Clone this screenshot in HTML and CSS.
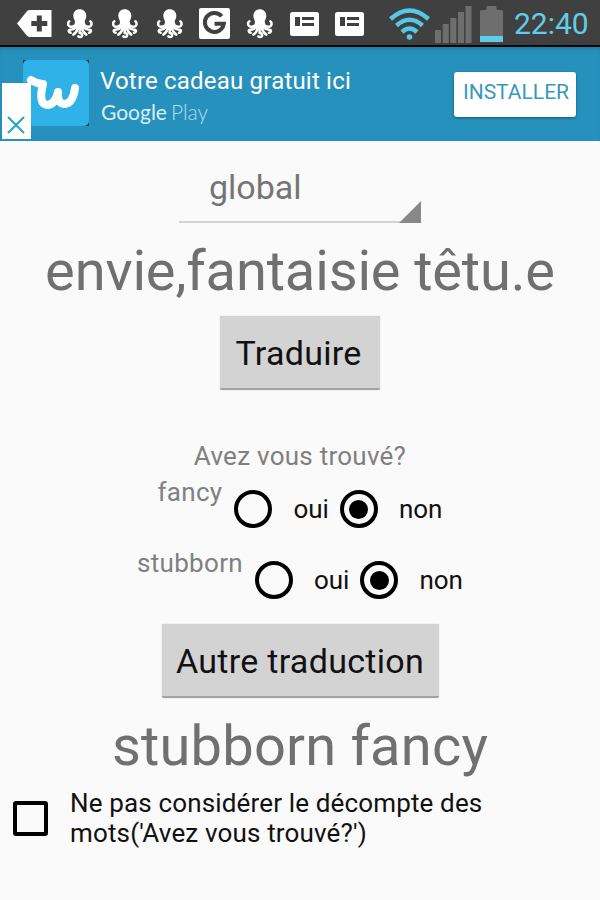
FILE: index.html
```html
<!DOCTYPE html>
<html lang="fr">
<head>
    <meta charset="UTF-8">
    <meta name="viewport" content="width=device-width, initial-scale=1.0">
    <title>Traduire</title>
    <link rel="stylesheet" href="styles.css">
</head>
<body>
    <svg width="0" height="0" class="symbols">
        <symbol id="octopus" viewBox="0 0 84 90">
            <path d="M41 1C30 1 22 9 22 20c0 8 4 12 5 18l-2 12 8 10h18l8-10-3-13c2-6 5-9 5-17C61 9 52 1 41 1z" fill="#fff"/>
            <g fill="none" stroke="#fff" stroke-width="7.5" stroke-linecap="round" stroke-linejoin="round">
                <path d="M10 37c-6 4-5 15 4 16 7 1 10-2 16-5"/>
                <path d="M73 37c6 4 5 15-4 16-7 1-10-2-16-5"/>
                <path d="M31 54c-5 5-9 9-19 8-6 0-5 9 2 9"/>
                <path d="M52 54c5 5 9 9 19 8 6 0 5 9-2 9"/>
                <path d="M36 57c-3 9-6 15-14 20"/>
                <path d="M47 57c3 9 6 15 14 20"/>
                <path d="M41 58v14c5 0 9 3 7 9-2 4-8 4-11 1"/>
            </g>
        </symbol>
        <symbol id="card" viewBox="0 0 29 24">
            <rect width="29" height="24" rx="2.5" fill="#fff"/>
            <path d="M5 5h5v9H5zM12 5h12v3H12zM12 11h12v3H12z" fill="#404040"/>
        </symbol>
    </svg>

    <div class="status-bar">
        <div class="notifications">
            <div class="notif"><svg width="35" height="27" viewBox="0 0 35 27"><path d="M0 13.5 10 1.2Q11 0 13 0h21.500v27H13q-2 0-3-1.200z" fill="#fff"/><path d="M22.300 5.500v16M14.300 13.500h16" stroke="#404040" stroke-width="5"/></svg></div>
            <div class="notif"><svg width="28" height="30"><use href="#octopus"/></svg></div>
            <div class="notif"><svg width="28" height="30"><use href="#octopus"/></svg></div>
            <div class="notif"><svg width="28" height="30"><use href="#octopus"/></svg></div>
            <div class="notif"><svg width="31" height="31" viewBox="0 0 31 31"><rect width="31" height="31" rx="2" fill="#fff"/><path d="M22.700 8.300A9.500 9.500 0 1 0 24.800 15.800H15.500" fill="none" stroke="#404040" stroke-width="4"/></svg></div>
            <div class="notif"><svg width="28" height="30"><use href="#octopus"/></svg></div>
            <div class="notif"><svg width="29" height="24"><use href="#card"/></svg></div>
            <div class="notif"><svg width="29" height="24"><use href="#card"/></svg></div>
        </div>
        <svg class="wifi" width="41" height="33" viewBox="0 0 41 33">
            <g fill="none" stroke="#55c8e6" stroke-width="4.500">
                <path d="M1.500 11Q20.500-6 39.500 11"/>
                <path d="M7.500 17.500Q20.500 6 33.500 17.500"/>
                <path d="M13 24Q20.500 17 28 24"/>
            </g>
            <circle cx="20.500" cy="29" r="2.800" fill="#55c8e6"/>
        </svg>
        <svg class="signal" width="37" height="37" viewBox="0 0 37 37"><path d="M0 24h6v13H0zM7.700 18h6v19h-6zM15.300 12h6v25h-6zM23 6h6v31h-6zM30.500 0h6v37h-6z" fill="#6e6e6e"/></svg>
        <svg class="battery" width="23" height="37" viewBox="0 0 23 37"><path d="M0 5.500 1 4h5l1-4h9l1 4h5l1 1.500V30H0z" fill="#6e6e6e"/><path d="M0 30h23v6H0z" fill="#5fcde8"/></svg>
        <span class="clock">22:40</span>
    </div>

    <div class="ad">
        <svg class="ad-logo" width="66" height="66" viewBox="0 0 66 66">
            <rect width="66" height="66" fill="#12404f"/>
            <rect width="66" height="66" rx="5" fill="#2fb2e8"/>
            <path d="M8 20Q14 24 20 24 15 44 24 45 32 45 35 32 34 44 42 44 50 43 52 28" fill="none" stroke="#fff" stroke-width="8" stroke-linecap="round" stroke-linejoin="round"/>
        </svg>
        <div class="ad-text">
            <span class="ad-title">Votre cadeau gratuit ici</span>
            <span class="ad-store"><b>Google</b><span>Play</span></span>
        </div>
        <button class="install-btn">INSTALLER</button>
        <div class="ad-close"><svg width="18" height="18" viewBox="0 0 18 18"><path d="M1 1l16 16M17 1 1 17" stroke="#2aa5c0" stroke-width="2.200"/></svg></div>
    </div>

    <div class="content">
        <div class="spinner">
            <span>global</span>
            <svg width="22" height="22" viewBox="0 0 22 22"><path d="M22 0v22H0z" fill="#888"/></svg>
        </div>
        <div class="word word-source">envie,fantaisie têtu.e</div>
        <button class="btn translate-btn">Traduire</button>
        <div class="question">Avez vous trouvé?</div>
        <div class="answer">
            <span class="answer-word">fancy</span>
            <label class="option"><i class="radio"></i>oui</label>
            <label class="option"><i class="radio checked"></i>non</label>
        </div>
        <div class="answer">
            <span class="answer-word">stubborn</span>
            <label class="option"><i class="radio"></i>oui</label>
            <label class="option"><i class="radio checked"></i>non</label>
        </div>
        <button class="btn other-btn">Autre traduction</button>
        <div class="word word-result">stubborn fancy</div>
        <label class="ignore">
            <i class="checkbox"></i>
            <span>Ne pas considérer le décompte des<br>mots('Avez vous trouvé?')</span>
        </label>
    </div>
</body>
</html>
```
FILE: styles.css
```css
* {
    box-sizing: border-box;
}

body {
    margin: 0;
    height: 900px;
    overflow: hidden;
    background-color: #fafafa;
    font-family: Roboto, sans-serif;
    color: #111;
}

svg {
    display: block;
    flex: none;
}

.symbols {
    position: absolute;
}

button {
    font-family: inherit;
    border: none;
    padding: 0;
}

/* Status bar */
.status-bar {
    display: flex;
    height: 47px;
    padding-left: 12px;
    background-color: #404040;
    border-bottom: 2px solid #080808;
}

.notifications {
    display: flex;
    height: 46px;
    margin-right: 17px;
}

.notif {
    display: flex;
    align-items: center;
    justify-content: center;
    width: 45px;
    padding-top: 1px;
}

.wifi {
    margin-top: 8px;
}

.signal {
    margin: 6px 0 0 5px;
}

.battery {
    margin: 6px 0 0 8px;
}

.clock {
    margin-left: 11px;
    font-size: 30px;
    line-height: 47px;
    white-space: nowrap;
    color: #62cde9;
}

/* Ad banner */
.ad {
    position: relative;
    display: flex;
    height: 94px;
    padding-left: 23px;
    background-color: #2791bd;
    box-shadow: inset 0 4px 4px -2px #20799e;
}

.ad-logo {
    margin-top: 13px;
}

.ad-text {
    display: flex;
    flex-direction: column;
    width: 354px;
    padding: 18px 0 0 11px;
    color: #fff;
}

.ad-title {
    font-size: 24px;
    line-height: 32px;
    letter-spacing: 0.2px;
    white-space: nowrap;
}

.ad-store {
    display: flex;
    gap: 4px;
    padding-left: 1px;
    font-family: Lato, sans-serif;
    font-size: 21px;
    line-height: 30px;
    color: #d8f0f8;
}

.ad-store b {
    font-weight: 400;
}

.ad-store span {
    font-weight: 300;
    color: #b5dcec;
}

.install-btn {
    width: 122px;
    height: 45px;
    margin: 25px 0 0 11px;
    padding: 0 0 5px 2px;
    border-radius: 3px;
    background-color: #fff;
    box-shadow: 0 1px 3px rgba(0, 0, 0, 0.4);
    font-size: 21px;
    color: #3a97be;
}

.ad-close {
    position: absolute;
    left: 2px;
    bottom: 2px;
    width: 29px;
    height: 56px;
    padding: 33px 0 0 5px;
    background-color: #fff;
}

/* Translation form */
.content {
    display: flex;
    flex-direction: column;
    align-items: center;
}

.spinner {
    display: flex;
    align-items: flex-end;
    justify-content: space-between;
    width: 242px;
    height: 82px;
    padding-left: 30px;
    border-bottom: 2px solid #d2d2d2;
    font-size: 34px;
    color: #757575;
}

.spinner span {
    line-height: 40px;
    margin-bottom: 14px;
}

.spinner svg {
    margin-bottom: -2px;
}

.word {
    font-size: 56px;
    line-height: 66px;
    white-space: nowrap;
    color: #707070;
}

.word-source {
    margin-top: 15px;
    letter-spacing: -0.15px;
}

.btn {
    height: 74px;
    border-radius: 2px;
    background-color: #d3d3d3;
    border-bottom: 2px solid #a2a2a2;
    box-shadow: 0 0 1px #aaa;
    font-size: 34px;
    letter-spacing: 0.3px;
    color: #111;
}

.translate-btn {
    width: 160px;
    margin-top: 12px;
    padding: 2px 3px 0 0;
}

.question {
    margin-top: 51px;
    font-size: 26px;
    line-height: 30px;
    letter-spacing: 0.25px;
    color: #808080;
}

.answer {
    display: flex;
    height: 71px;
    font-size: 26px;
    line-height: 30px;
}

.question + .answer {
    margin-top: 6px;
}

.answer-word {
    margin-right: 12px;
    letter-spacing: 0.3px;
    color: #808080;
}

.option {
    display: flex;
    align-items: center;
    height: 64px;
}

.option + .option {
    margin-left: 11px;
}

.radio {
    position: relative;
    width: 38px;
    height: 38px;
    margin-right: 21px;
    border: 4px solid #000;
    border-radius: 50%;
}

.radio.checked::after {
    content: "";
    position: absolute;
    inset: 5.5px;
    border-radius: 50%;
    background-color: #000;
}

.other-btn {
    width: 277px;
    margin-top: 5px;
    padding-top: 2px;
}

.word-result {
    margin-top: 15px;
    letter-spacing: 0.2px;
}

.ignore {
    display: flex;
    align-items: center;
    align-self: stretch;
    margin-top: 9px;
    padding-left: 13px;
    font-size: 26px;
    line-height: 30px;
    letter-spacing: 0.15px;
    white-space: nowrap;
}

.checkbox {
    width: 35px;
    height: 35px;
    margin-right: 22px;
    border: 4px solid #000;
    border-radius: 3px;
}
```
